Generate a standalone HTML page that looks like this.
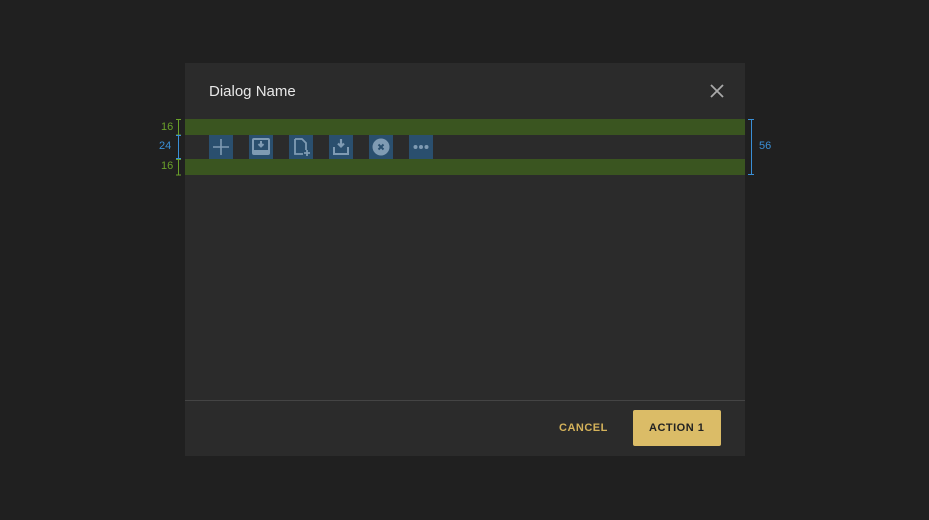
<!DOCTYPE html><html><head><style>
body{margin:0;width:929px;height:520px;background:#202020;font-family:"Liberation Sans",sans-serif;position:relative;overflow:hidden}
.d{position:absolute;left:185px;top:63px;width:560px;height:393px;background:#2b2b2b}
.t{position:absolute;left:24px;top:19px;color:#e8e8e8;font-size:15px;line-height:18px;margin-top:1px}
.g{position:absolute;left:0;width:560px;height:16px;background:#3a5520}
.ic{position:absolute;top:72px;width:24px;height:24px;background:#2a4f6e}
.ic svg{display:block}
.n{position:absolute;font-size:11px}
.btn{position:absolute;font-size:11px;font-weight:bold;letter-spacing:.5px}
</style></head><body>
<div class="d">
<div class="t">Dialog Name</div>
<svg style="position:absolute;left:525px;top:21px" width="14" height="14"><path d="M1 1L13 13M13 1L1 13" stroke="#aaa" stroke-width="1.8"/></svg>
<div class="g" style="top:56px"></div>
<div class="g" style="top:96px"></div>
<div class="ic" style="left:24px"><svg width="24" height="24"><path d="M12 4V20M4 12H20" stroke="#7f9bb3" stroke-width="1.6"/></svg></div>
<div class="ic" style="left:64px"><svg width="24" height="24"><rect x="4" y="4" width="16" height="15" rx="1" fill="none" stroke="#7f9bb3" stroke-width="2"/><path d="M4 15H20V19H4Z" fill="#7f9bb3"/><path d="M12 6V11M9.5 9L12 11.5 14.5 9" stroke="#7f9bb3" stroke-width="2" fill="none"/></svg></div>
<div class="ic" style="left:104px"><svg width="24" height="24"><path d="M6 4H13L17 8V15M14 19H6V4" fill="none" stroke="#7f9bb3" stroke-width="1.8"/><path d="M18 15V21M15 18H21" stroke="#7f9bb3" stroke-width="1.8"/></svg></div>
<div class="ic" style="left:144px"><svg width="24" height="24"><path d="M5 12V19H19V12" fill="none" stroke="#7f9bb3" stroke-width="2"/><path d="M12 4V11M9 8.5L12 11.5 15 8.5" stroke="#7f9bb3" stroke-width="2.2" fill="none"/></svg></div>
<div class="ic" style="left:184px"><svg width="24" height="24"><circle cx="12" cy="12" r="8.5" fill="#7f9bb3"/><path d="M9.5 9.5L14.5 14.5M14.5 9.5L9.5 14.5" stroke="#2a4f6e" stroke-width="2"/></svg></div>
<div class="ic" style="left:224px"><svg width="24" height="24"><circle cx="6.5" cy="12" r="2" fill="#7f9bb3"/><circle cx="12" cy="12" r="2" fill="#7f9bb3"/><circle cx="17.5" cy="12" r="2" fill="#7f9bb3"/></svg></div>
<div style="position:absolute;left:0;top:337px;width:560px;height:1px;background:#444"></div>
<div class="btn" style="left:374px;top:359px;color:#d4b25a">CANCEL</div>
<div style="position:absolute;left:448px;top:347px;width:88px;height:36px;background:#dbbc67;border-radius:2px"></div>
<div class="btn" style="left:464px;top:359px;color:#222">ACTION 1</div>
</div>
<svg style="position:absolute;left:0;top:0" width="929" height="520">
<path d="M176 119.5H181M178.5 119.5V135M176 135H181" stroke="#6aa12a" stroke-width="1"/>
<path d="M176 159.5H181M178.5 159.5V175M176 175H181" stroke="#6aa12a" stroke-width="1"/>
<path d="M176 135.5H181M178.5 135.5V159M176 158.5H181" stroke="#3a8fd6" stroke-width="1"/>
<path d="M748 119.5H754M751.5 119.5V175M748 174.5H754" stroke="#3a8fd6" stroke-width="1"/>
</svg>
<div class="n" style="left:161px;top:121px;color:#6aa12a">16</div>
<div class="n" style="left:159px;top:140px;color:#3a8fd6">24</div>
<div class="n" style="left:161px;top:160px;color:#6aa12a">16</div>
<div class="n" style="left:759px;top:140px;color:#3a8fd6">56</div>
</body></html>
